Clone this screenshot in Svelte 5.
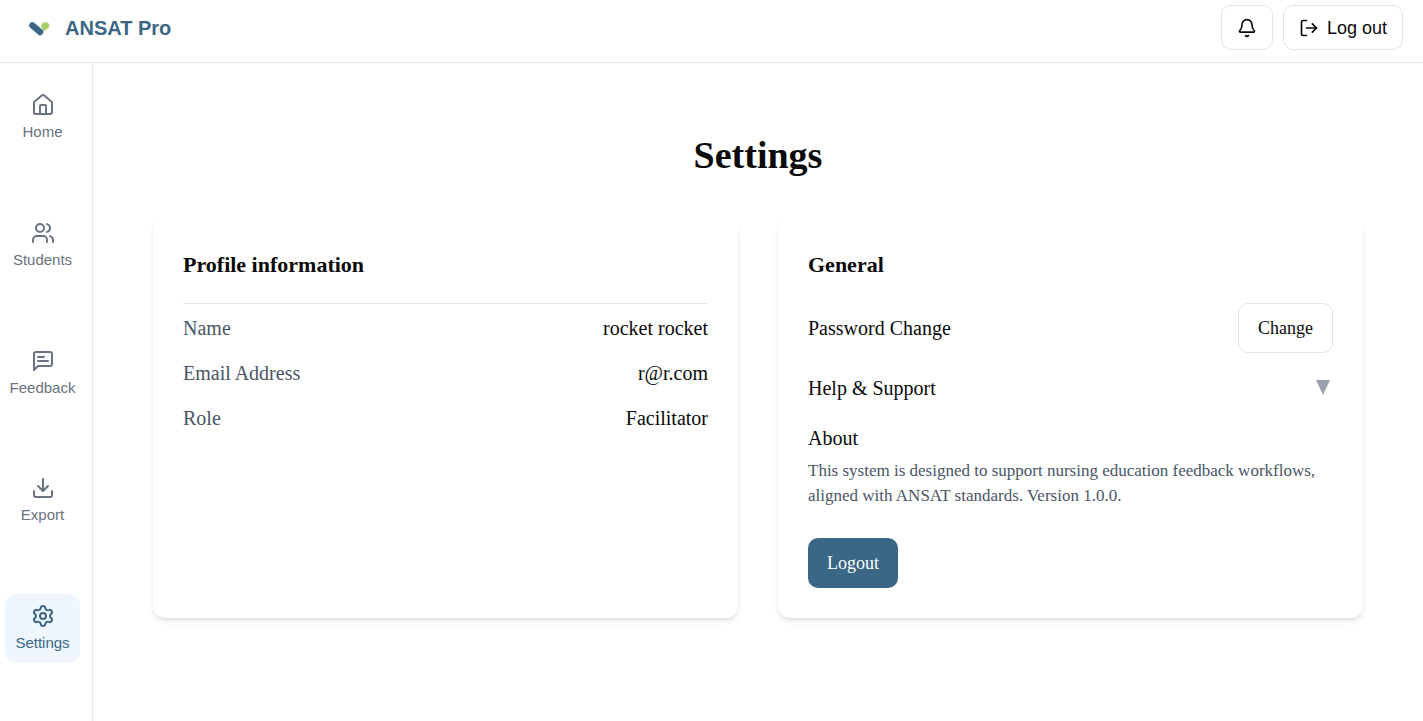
<script>
  const navItems = [
    {
      label: 'Home',
      paths: [
        'M15 21v-8a1 1 0 0 0-1-1h-4a1 1 0 0 0-1 1v8',
        'M3 10a2 2 0 0 1 .709-1.528l7-5.999a2 2 0 0 1 2.582 0l7 5.999A2 2 0 0 1 21 10v9a2 2 0 0 1-2 2H5a2 2 0 0 1-2-2z'
      ]
    },
    {
      label: 'Students',
      paths: [
        'M16 21v-2a4 4 0 0 0-4-4H6a4 4 0 0 0-4 4v2',
        'M13 7a4 4 0 1 1-8 0 4 4 0 0 1 8 0z',
        'M22 21v-2a4 4 0 0 0-3-3.87',
        'M16 3.13a4 4 0 0 1 0 7.75'
      ]
    },
    {
      label: 'Feedback',
      paths: [
        'M21 15a2 2 0 0 1-2 2H7l-4 4V5a2 2 0 0 1 2-2h14a2 2 0 0 1 2 2z',
        'M13 8H7',
        'M17 12H7'
      ]
    },
    {
      label: 'Export',
      paths: ['M12 15V3', 'M21 15v4a2 2 0 0 1-2 2H5a2 2 0 0 1-2-2v-4', 'm7 10 5 5 5-5']
    },
    {
      label: 'Settings',
      active: true,
      paths: [
        'M9.671 4.136a2.34 2.34 0 0 1 4.659 0 2.34 2.34 0 0 0 3.319 1.915 2.34 2.34 0 0 1 2.33 4.033 2.34 2.34 0 0 0 0 3.831 2.34 2.34 0 0 1-2.33 4.033 2.34 2.34 0 0 0-3.319 1.915 2.34 2.34 0 0 1-4.659 0 2.34 2.34 0 0 0-3.32-1.915 2.34 2.34 0 0 1-2.33-4.033 2.34 2.34 0 0 0 0-3.831A2.34 2.34 0 0 1 6.35 6.051a2.34 2.34 0 0 0 3.319-1.915',
        'M15 12a3 3 0 1 1-6 0 3 3 0 0 1 6 0z'
      ]
    }
  ];

  const profile = [
    ['Name', 'rocket rocket'],
    ['Email Address', 'r@r.com'],
    ['Role', 'Facilitator']
  ];
</script>

{#snippet icon(paths, size)}
  <svg width={size} height={size} viewBox="0 0 24 24" fill="none" stroke="currentColor" stroke-width="2" stroke-linecap="round" stroke-linejoin="round" aria-hidden="true">
    {#each paths as d}<path {d} />{/each}
  </svg>
{/snippet}

<div class="app">
  <header>
    <a class="brand" href="#home">
      <svg width="35" height="30" viewBox="0 0 35 30" aria-hidden="true">
        <path d="M12.4 12.4 20.1 19" stroke="#3a6785" stroke-width="6.4" stroke-linecap="round" />
        <path d="M24 18c-1.2-1.6-2.6-2.8-2.6-4.8A3.9 3.9 0 0 1 25.4 9.2c2.2 0 3.8 1 3.8 3.2 0 2.8-2.6 3.6-5.2 5.6z" fill="#a9cf62" />
      </svg>
      <span>ANSAT Pro</span>
    </a>
    <div class="actions">
      <button class="outline bar" aria-label="Notifications">
        {@render icon(['M10.268 21a2 2 0 0 0 3.464 0', 'M3.262 15.326A1 1 0 0 0 4 17h16a1 1 0 0 0 .74-1.673C19.41 13.956 18 12.499 18 8A6 6 0 0 0 6 8c0 4.499-1.411 5.956-2.738 7.326'], 20)}
      </button>
      <button class="outline bar">
        {@render icon(['m16 17 5-5-5-5', 'M21 12H9', 'M9 21H5a2 2 0 0 1-2-2V5a2 2 0 0 1 2-2h4'], 20)}
        Log out
      </button>
    </div>
  </header>

  <div class="body">
    <nav>
      {#each navItems as item}
        <a href="#{item.label.toLowerCase()}" class:active={item.active} aria-current={item.active ? 'page' : undefined}>
          {@render icon(item.paths, 24)}
          <span>{item.label}</span>
        </a>
      {/each}
    </nav>

    <main>
      <h1>Settings</h1>
      <div class="cards">
        <section>
          <h2>Profile information</h2>
          <dl>
            {#each profile as [label, value]}
              <div class="row"><dt>{label}</dt><dd>{value}</dd></div>
            {/each}
          </dl>
        </section>

        <section>
          <h2>General</h2>
          <div class="general">
            <div class="row">
              <span>Password Change</span>
              <button class="outline action">Change</button>
            </div>
            <button class="row disclosure" aria-expanded="false">
              <span>Help &amp; Support</span>
              <svg width="20" height="20" viewBox="0 0 20 20" aria-hidden="true"><path d="M3 2h14l-7 15z" fill="#99a1af" /></svg>
            </button>
            <div>
              <h3>About</h3>
              <p>This system is designed to support nursing education feedback workflows, aligned with ANSAT standards. Version 1.0.0.</p>
            </div>
          </div>
          <button class="action primary">Logout</button>
        </section>
      </div>
    </main>
  </div>
</div>

<style>
  :global(body) {
    background: #fff;
  }
  .app {
    min-height: 100vh;
    display: flex;
    flex-direction: column;
    color: #0a0a0a;
    font-family: 'Liberation Serif', 'Times New Roman', serif;
    font-size: 20px;
    line-height: 30px;
  }
  .app, .app * {
    box-sizing: border-box;
  }
  h1, h2, h3, p, dl, dd {
    margin: 0;
  }
  svg {
    display: block;
    flex: none;
  }
  a {
    text-decoration: none;
  }
  button {
    font: inherit;
    color: inherit;
    background: none;
    border: 0;
    padding: 0;
    cursor: pointer;
  }
  header {
    display: flex;
    align-items: center;
    justify-content: space-between;
    padding: 5px 20px 12px;
    border-bottom: 1px solid #e5e7eb;
    font-family: 'Liberation Sans', Arial, sans-serif;
  }
  .brand {
    display: flex;
    align-items: center;
    gap: 10px;
    color: #3a6785;
    font-weight: 700;
    line-height: 28px;
  }
  .actions {
    display: flex;
    gap: 10px;
  }
  .outline {
    border: 1px solid #e5e5e5;
    border-radius: 10px;
    background: #fff;
  }
  .bar {
    display: flex;
    align-items: center;
    gap: 8px;
    height: 45px;
    padding: 0 15px;
    font-size: 18px;
  }
  .body {
    flex: 1;
    display: flex;
  }
  nav {
    flex: none;
    width: 93px;
    display: flex;
    flex-direction: column;
    justify-content: space-between;
    padding: 20px 12px 58px 5px;
    border-right: 1px solid #e5e7eb;
    font-family: 'Liberation Sans', Arial, sans-serif;
    font-size: 15px;
    line-height: 20px;
  }
  nav a {
    display: flex;
    flex-direction: column;
    align-items: center;
    gap: 5px;
    padding: 10px 0;
    border-radius: 12px;
    color: #6b7280;
  }
  nav a.active {
    background: #eff6ff;
    color: #3a6785;
  }
  main {
    flex: 1;
    padding: 70px 60px;
  }
  h1 {
    margin-bottom: 40px;
    font-size: 38px;
    line-height: 45px;
    text-align: center;
  }
  .cards {
    display: grid;
    grid-template-columns: 1fr 1fr;
    gap: 40px;
  }
  section {
    padding: 30px;
    border-radius: 12px;
    background: #fff;
    box-shadow: 0 4px 6px -1px rgb(0 0 0 / 0.1), 0 2px 4px -2px rgb(0 0 0 / 0.1);
  }
  h2 {
    margin-bottom: 22px;
    font-size: 22px;
    line-height: 33px;
  }
  dl {
    display: flex;
    flex-direction: column;
    gap: 15px;
    padding-top: 9px;
    border-top: 1px solid #e5e5e5;
  }
  .row {
    display: flex;
    align-items: center;
    justify-content: space-between;
  }
  dt, p {
    color: #4a5565;
  }
  .general {
    display: flex;
    flex-direction: column;
    gap: 20px;
    margin-bottom: 30px;
  }
  .disclosure {
    width: 100%;
  }
  h3 {
    margin-bottom: 5px;
    font-size: 20px;
    font-weight: 400;
  }
  p {
    font-size: 17px;
    line-height: 25px;
  }
  .action {
    height: 50px;
    padding: 0 19px;
    font-size: 18px;
  }
  .primary {
    border-radius: 10px;
    background: #3a6785;
    color: #fff;
  }
</style>
